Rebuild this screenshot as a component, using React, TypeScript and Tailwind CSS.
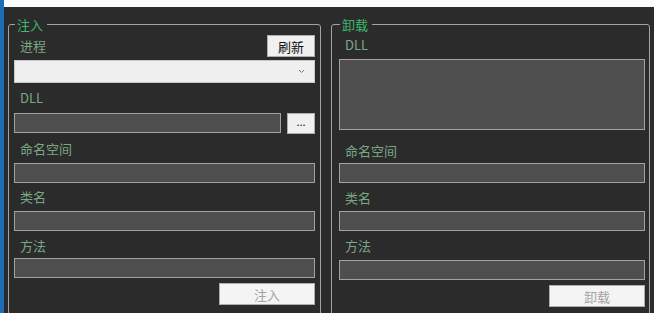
import React from 'react';

const FONT = { fontFamily: '"Noto Sans CJK SC", "Noto Sans", sans-serif' };

const Label = ({ text, pad }: { text: string; pad: string }) => (
  <div className={`${pad} h-[17px] box-content text-[13px] leading-[17px] text-[#7aa886]`}>
    <span className="pl-[6px]">{text}</span>
  </div>
);

const TextBox = ({ className = '' }: { className?: string }) => (
  <div className={`h-[20px] bg-[#4e4e4e] border border-[#a2a2a2] ${className}`} />
);

const Group = ({
  title,
  className,
  children,
}: {
  title: string;
  className: string;
  children: React.ReactNode;
}) => (
  <fieldset className={`border border-[#a3a3a3] rounded-[3px] h-[320px] ${className}`}>
    <legend className="ml-[1px] pl-[2px] pr-[4px] text-[13px] leading-[17px] text-[#3fb96d]">{title}</legend>
    {children}
  </fieldset>
);

export default function App() {
  return (
    <div className="w-[654px] h-[313px] overflow-hidden flex bg-[#2b2b2b]" style={FONT}>
      {/* window edge */}
      <div className="w-[4px] bg-[#1c6cb6] shrink-0" />
      <div className="flex-1 flex flex-col">
        <div className="h-[7px] bg-[#fbfbfb] shrink-0" />
        <div className="flex gap-[10px] pl-[4px] pt-[9px]">
          {/* inject */}
          <Group title="注入" className="w-[313px] pl-[5px] pr-[5px]">
            <div className="flex flex-col">
              <div className="flex items-center justify-between h-[22px] mt-[2px]">
                <span className="pl-[6px] pb-[2px] text-[13px] leading-[17px] text-[#7aa886]">进程</span>
                <button className="w-[48px] h-[22px] bg-[#f0f0f0] border border-[#adadad] text-[13px] leading-none text-[#111]">
                  刷新
                </button>
              </div>
              <div className="mt-[3px] h-[23px] bg-[#efefef] border border-[#c8c8c8] flex items-center justify-end pr-[9px]">
                <svg width="7" height="5" viewBox="0 0 7 5">
                  <path d="M1 1 L3.5 3.5 L6 1" fill="none" stroke="#777" strokeWidth="1" />
                </svg>
              </div>
              <Label text="DLL" pad="pt-[6px] pb-[7px]" />
              <div className="flex gap-[6px] items-start">
                <TextBox className="flex-1" />
                <button className="w-[28px] h-[21px] bg-[#f0f0f0] border border-[#adadad] text-[11px] leading-none text-[#222] pb-[4px]">
                  ...
                </button>
              </div>
              <Label text="命名空间" pad="pt-[6px] pb-[6px]" />
              <TextBox />
              <Label text="类名" pad="pt-[5px] pb-[6px]" />
              <TextBox />
              <Label text="方法" pad="pt-[6px] pb-[4px]" />
              <TextBox />
              <div className="flex justify-end mt-[5px]">
                <button className="w-[96px] h-[22px] bg-[#f4f4f4] border border-[#adadad] text-[13px] leading-none text-[#a3a3a3]">
                  注入
                </button>
              </div>
            </div>
          </Group>
          {/* eject */}
          <Group title="卸载" className="w-[319px] pl-[7px] pr-[4px]">
            <div className="flex flex-col">
              <Label text="DLL" pad="pt-[3px] pb-[6px]" />
              <div className="h-[71px] bg-[#4e4e4e] border border-[#a2a2a2]" />
              <Label text="命名空间" pad="pt-[12px] pb-[4px]" />
              <TextBox />
              <Label text="类名" pad="pt-[6px] pb-[5px]" />
              <TextBox />
              <Label text="方法" pad="pt-[6px] pb-[6px]" />
              <TextBox />
              <div className="flex justify-end mt-[5px]">
                <button className="w-[96px] h-[22px] bg-[#f4f4f4] border border-[#adadad] text-[13px] leading-none text-[#a3a3a3]">
                  卸载
                </button>
              </div>
            </div>
          </Group>
        </div>
      </div>
    </div>
  );
}
